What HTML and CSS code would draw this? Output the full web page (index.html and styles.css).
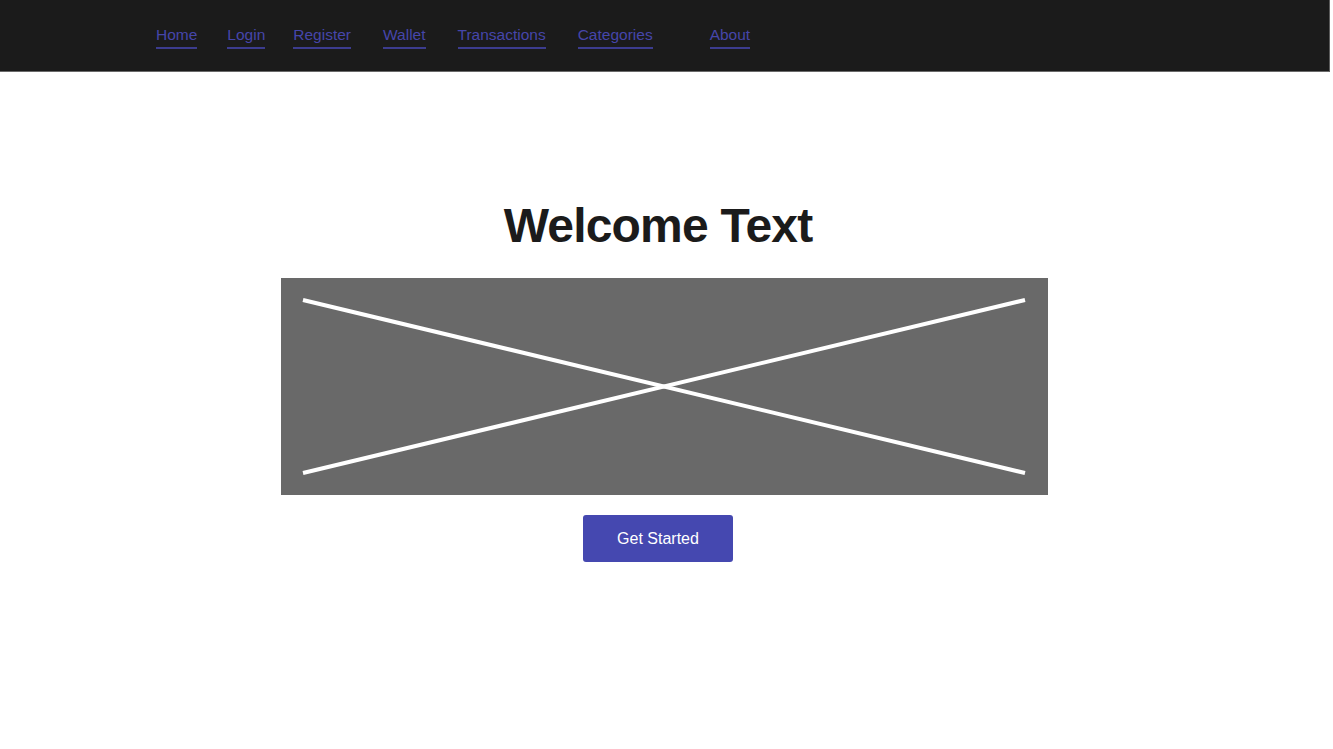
FILE: index.html
```html
<!DOCTYPE html>
<html>
<head>
<meta charset="utf-8">
<link rel="stylesheet" href="styles.css">
</head>
<body>
<nav class="topbar">
  <ul class="nav-list">
    <li><a href="#">Home</a></li>
    <li><a href="#">Login</a></li>
    <li><a href="#">Register</a></li>
    <li><a href="#">Wallet</a></li>
    <li><a href="#">Transactions</a></li>
    <li><a href="#">Categories</a></li>
    <li class="about"><a href="#">About</a></li>
  </ul>
</nav>
<main class="hero">
  <h1 class="hero-title">Welcome Text</h1>
  <div class="placeholder">
    <svg width="767" height="217" viewBox="0 0 767 217">
      <line x1="22" y1="22" x2="744" y2="195" stroke="#fff" stroke-width="4"/>
      <line x1="22" y1="195" x2="744" y2="22" stroke="#fff" stroke-width="4"/>
    </svg>
  </div>
  <button class="cta">Get Started</button>
</main>
</body>
</html>
```
FILE: styles.css
```css
html, body {
  margin: 0;
  padding: 0;
  background: #fff;
  font-family: "Liberation Sans", Arial, sans-serif;
}
.topbar {
  width: 1330px;
  height: 72px;
  background: #1b1b1b;
  border-right: 1px solid #5a5a5a;
  border-bottom: 1px solid #6a6a6a;
  box-sizing: border-box;
}
.nav-list {
  list-style: none;
  margin: 0;
  padding: 26px 0 0 156px;
  display: flex;
  gap: 30px;
}
.nav-list li a {
  display: block;
  color: #4646aa;
  text-decoration: none;
  font-size: 15.5px;
  line-height: 18px;
  padding-bottom: 3px;
  border-bottom: 2px solid #3c3c8e;
}
.nav-list li:nth-child(3) { margin-left: -2px; }
.nav-list li:nth-child(4) { margin-left: 2px; }
.nav-list li:nth-child(5) { margin-left: 2px; }
.nav-list li:nth-child(6) { margin-left: 2px; }
.nav-list li.about { margin-left: 27px; }
.hero {
  display: flex;
  flex-direction: column;
  align-items: center;
  padding: 126px 17px 0 0;
}
.hero-title {
  margin: 0;
  font-size: 48px;
  line-height: 56px;
  font-weight: bold;
  letter-spacing: -0.8px;
  color: #1b1b1b;
}
.placeholder {
  margin-top: 24px;
  margin-right: -13px;
  width: 767px;
  height: 217px;
  background: #696969;
}
.placeholder svg {
  display: block;
}
.cta {
  margin-top: 20px;
  width: 150px;
  height: 47px;
  border: none;
  border-radius: 3px;
  background: #4548b0;
  color: #fff;
  font-family: "Liberation Sans", Arial, sans-serif;
  font-size: 16px;
}
```
